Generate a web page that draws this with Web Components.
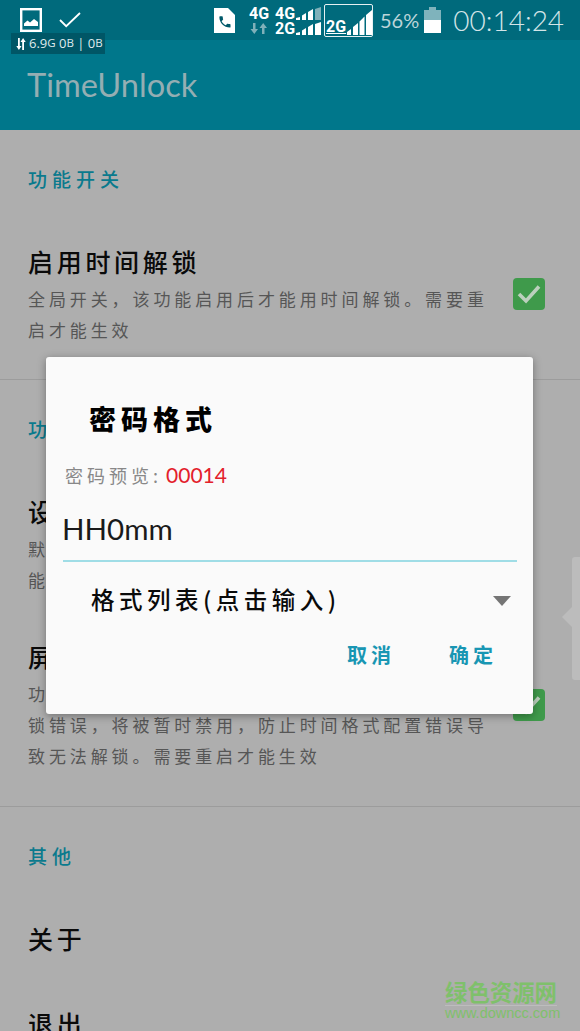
<!DOCTYPE html>
<html lang="zh">
<head>
<meta charset="utf-8">
<title>TimeUnlock</title>
<style>
    html, body{ margin:0; padding:0; }
    body{
        width:580px;
        height:1031px;
        overflow:hidden;
        position:relative;
        background:#aeaeae;
        font-family:"Lato","Noto Sans CJK SC",sans-serif;
    }
</style>
</head>
<body>
<status-bar></status-bar>
<app-bar>TimeUnlock</app-bar>

<pref-section title="功能开关" last-pad="34">
    <pref-item head="启用时间解锁" checked>全局开关，该功能启用后才能用时间解锁。需要重启才能生效</pref-item>
</pref-section>

<pref-section title="功能设置" last-pad="35">
    <pref-item head="设置密码格式">默认使用当前的时分作为密码，修改后需要重启才能生效</pref-item>
    <pref-item head="屏蔽时间解锁错误" checked gap="43">功能启用后，如果在屏幕解锁连续多次出现时间解锁错误，将被暂时禁用，防止时间格式配置错误导致无法解锁。需要重启才能生效</pref-item>
</pref-section>

<pref-section title="其他" plain>
    <pref-item head="关于"></pref-item>
    <pref-item head="退出" gap="49"></pref-item>
</pref-section>

<side-handle></side-handle>
<water-mark></water-mark>

<format-dialog>
    <span slot="title">密码格式</span>
    <span slot="label">密码预览:</span>
    <span slot="preview">00014</span>
    <span slot="input">HH0mm</span>
    <span slot="spinner">格式列表(点击输入)</span>
    <span slot="cancel">取消</span>
    <span slot="ok">确定</span>
</format-dialog>

<script>
//STATUS BAR
var template_statusbar = document.createElement("template");
template_statusbar.innerHTML = `
<style>
    :host{
        display:flex;
        align-items:center;
        height:40px;
        background:#006a7c;
        color:#fff;
        position:relative;
        font-family:"Roboto",sans-serif;
    }
    svg{ display:block; flex:none; }
    .pic{ margin-left:20px; }
    .tick{ margin-left:17px; }
    .sim{ margin-left:133px; }
    .net{
        margin-left:14px;
        margin-top:2px;
        width:75px;
        display:grid;
        grid-template-columns:26px 21px 28px;
        grid-template-rows:15px 15px;
        align-items:center;
        font:700 16px/15px "Roboto",sans-serif;
    }
    .box{
        box-sizing:border-box;
        width:49px;
        height:33px;
        border:1.5px solid #e6f0f2;
        border-radius:2px;
        display:flex;
        align-items:flex-end;
        padding:0 1px 1px 1px;
        font:700 16px/17px "Roboto",sans-serif;
    }
    .box u{ text-underline-offset:1px; }
    .pct{
        margin-left:7px;
        font:400 20px/1 "Lato",sans-serif;
        color:#bcd5d9;
    }
    .bat{ margin-left:5px; }
    .clock{
        margin-left:12px;
        font:300 28px/1 "Lato",sans-serif;
        color:#d4e5e8;
    }
    .chip{
        position:absolute;
        left:11px;
        top:33px;
        width:94px;
        height:21px;
        box-sizing:border-box;
        padding-left:5px;
        background:#005666;
        display:flex;
        align-items:center;
        gap:3px;
        font:400 13px/1 "Open Sans",sans-serif;
        color:#dfeaec;
        white-space:nowrap;
    }
    .chip sup{ font-size:11.5px; vertical-align:1px; line-height:0; }
</style>
<svg class="pic" width="22" height="24" viewBox="0 0 22 24">
    <rect x="1.2" y="1.2" width="19.6" height="21.6" fill="none" stroke="#fff" stroke-width="2.4"/>
    <path d="M4 18v-2.5l3.5-3 2.5 2 4-3.500 4 3V18z" fill="#fff"/>
</svg>
<svg class="tick" width="22" height="16" viewBox="0 0 22 16">
    <path d="M1 8l6.200 6.200L21 1" fill="none" stroke="#fff" stroke-width="1.800"/>
</svg>
<svg class="sim" width="21" height="25" viewBox="0 0 21 25">
    <path d="M0 0h14l7 7v18H0z" fill="#fff"/>
    <g transform="translate(3.500 6.500) scale(.62)">
        <path fill="#00596a" d="M6.62 10.79c1.44 2.83 3.76 5.14 6.59 6.59l2.2-2.2c.27-.27.67-.36 1.02-.24 1.12.37 2.33.57 3.57.57.55 0 1 .45 1 1V20c0 .55-.45 1-1 1-9.39 0-17-7.61-17-17 0-.55.45-1 1-1h3.5c.55 0 1 .45 1 1 0 1.25.2 2.45.57 3.57.11.35.03.74-.25 1.02l-2.2 2.2z"/>
    </g>
</svg>
<div class="net">
    <span>4G</span><span>4G</span>
    <svg width="25" height="13" viewBox="0 0 25 13">
        <path fill="#fff" d="M0 11l4-1v3H0zM6 8.500l4-2.500v7H6zM12 5l5-3v11h-5z"/><path fill="#7fb0b9" d="M19 2l6-2v13h-6z"/>
    </svg>
    <svg width="20" height="11" viewBox="0 0 20 11">
        <path fill="#7fb0b9" d="M4 0h2.500v6H9l-3.700 5L1.500 6H4zM13 11V5h-2.500l3.700-5L18 5h-2.500v6z"/>
    </svg>
    <span>2G</span>
    <svg width="25" height="13" viewBox="0 0 25 13">
        <path fill="#fff" d="M0 11l4-1v3H0zM6 8.500l4-2.500v7H6zM12 5l5-3v11h-5zM19 2l6-2v13h-6z"/>
    </svg>
</div>
<div class="box">
    <u>2G</u>
    <svg style="margin-left:1px" width="25" height="25" viewBox="0 0 25 25">
        <path fill="#fff" d="M0 22l4-3v6H0zM6 17l5-4v12H6zM12.500 11.500l5-5V25h-5zM19 5l6-5v25h-6z"/>
    </svg>
</div>
<span class="pct">56%</span>
<svg class="bat" width="17" height="26" viewBox="0 0 17 26">
    <path fill="#7fb3bc" d="M5 0h7v3h5v10H0V3h5z"/>
    <rect y="13" width="17" height="13" fill="#fff"/>
</svg>
<span class="clock">00:14:24</span>
<div class="chip">
    <svg width="10" height="12" viewBox="0 0 10 12">
        <path fill="#fff" d="M2 0h1.800v8H5.500L2.900 12 .3 8H2zM6.200 12V4H4.500L7.100 0l2.600 4H8v8z"/>
    </svg>
    <span>6.9<sup>G</sup> 0<sup>B</sup> | 0<sup>B</sup></span>
</div>
`;
class StatusBar extends HTMLElement {
    constructor(){
        super();
        this.attachShadow({mode:"open"});
    }
    connectedCallback(){
        this.shadowRoot.appendChild(template_statusbar.content.cloneNode(true));
    }
}
customElements.define("status-bar", StatusBar);

//APP BAR
var template_appbar = document.createElement("template");
template_appbar.innerHTML = `
<style>
    :host{
        display:flex;
        align-items:center;
        height:90px;
        padding-left:27px;
        box-sizing:border-box;
        background:#00778b;
        color:#94aeb3;
        font:400 32.6px/1 "Lato",sans-serif;
    }
</style>
<slot></slot>
`;
class AppBar extends HTMLElement {
    constructor(){
        super();
        this.attachShadow({mode:"open"});
    }
    connectedCallback(){
        this.shadowRoot.appendChild(template_appbar.content.cloneNode(true));
    }
}
customElements.define("app-bar", AppBar);

//SECTION WITH HEADER AND DIVIDER
var template_section = document.createElement("template");
template_section.innerHTML = `
<style>
    :host{
        display:block;
        padding:35px 0 var(--bottom, 32px) 28px;
        border-bottom:1px solid #9c9c9c;
    }
    :host([plain]){ border-bottom:0; padding-bottom:0; }
    .head{
        font:500 19px/28px "Noto Sans CJK SC",sans-serif;
        letter-spacing:5px;
        color:#0a7a8d;
        margin-bottom:50px;
    }
</style>
<div class="head"></div>
<slot></slot>
`;
class PrefSection extends HTMLElement {
    constructor(){
        super();
        this.attachShadow({mode:"open"});
    }
    connectedCallback(){
        this.shadowRoot.appendChild(template_section.content.cloneNode(true));
        this.shadowRoot.querySelector(".head").innerText = this.getAttribute("title");
        this.removeAttribute("title");
        if(this.hasAttribute("last-pad")){
            this.style.setProperty("--bottom", this.getAttribute("last-pad") + "px");
        }
    }
}
customElements.define("pref-section", PrefSection);

//PREFERENCE ROW
var template_item = document.createElement("template");
template_item.innerHTML = `
<style>
    :host{
        display:flex;
        align-items:center;
        width:517px;
        justify-content:space-between;
    }
    .text{ width:470px; }
    .title{
        font:500 25px/36px "Noto Sans CJK SC",sans-serif;
        letter-spacing:3.7px;
        color:#0a0a0a;
    }
    .sum{
        margin-top:4px;
        font:400 17px/31px "Noto Sans CJK SC",sans-serif;
        letter-spacing:3.9px;
        color:#565656;
    }
    .box{
        flex:none;
        width:32px;
        height:32px;
        border-radius:4px;
        background:#3f9a4b;
        display:none;
        align-items:center;
        justify-content:center;
    }
    :host([checked]) .box{ display:flex; }
</style>
<div class="text">
    <div class="title"></div>
    <div class="sum"><slot></slot></div>
</div>
<div class="box">
    <svg width="24" height="20" viewBox="0 0 24 20">
        <path d="M2 10l7 7L22 2.500" fill="none" stroke="#bcd0bd" stroke-width="3.600"/>
    </svg>
</div>
`;
class PrefItem extends HTMLElement {
    constructor(){
        super();
        this.attachShadow({mode:"open"});
    }
    connectedCallback(){
        this.shadowRoot.appendChild(template_item.content.cloneNode(true));
        this.shadowRoot.querySelector(".title").innerText = this.getAttribute("head");
        if(this.hasAttribute("gap")){
            this.style.marginTop = this.getAttribute("gap") + "px";
        }
        if(this.textContent.trim() == ""){
            this.shadowRoot.querySelector(".sum").style.display = "none";
        }
    }
}
customElements.define("pref-item", PrefItem);

//HANDLE ON THE RIGHT EDGE
var template_handle = document.createElement("template");
template_handle.innerHTML = `
<style>
    :host{
        position:absolute;
        left:572px;
        top:557px;
        width:8px;
        height:123px;
        background:#bcbcbc;
        border-radius:3px 0 0 3px;
    }
    .tip{
        position:absolute;
        left:-10px;
        top:50px;
        width:0;
        height:0;
        border-style:solid;
        border-width:10px 10px 10px 0;
        border-color:transparent #bcbcbc transparent transparent;
    }
</style>
<div class="tip"></div>
`;
class SideHandle extends HTMLElement {
    constructor(){
        super();
        this.attachShadow({mode:"open"});
    }
    connectedCallback(){
        this.shadowRoot.appendChild(template_handle.content.cloneNode(true));
    }
}
customElements.define("side-handle", SideHandle);

//SITE WATERMARK
var template_mark = document.createElement("template");
template_mark.innerHTML = `
<style>
    :host{
        position:absolute;
        left:445px;
        top:978px;
        width:112px;
        color:#7fc06b;
        text-align:center;
    }
    .cn{
        font:700 22.400px/27px "Noto Sans CJK SC",sans-serif;
        white-space:nowrap;
        border-bottom:1px solid #bdbdbd;
    }
    .en{
        font:400 14.500px/15px "Liberation Sans",sans-serif;
        white-space:nowrap;
    }
</style>
<div class="cn">绿色资源网</div>
<div class="en">www.downcc.com</div>
`;
class WaterMark extends HTMLElement {
    constructor(){
        super();
        this.attachShadow({mode:"open"});
    }
    connectedCallback(){
        this.shadowRoot.appendChild(template_mark.content.cloneNode(true));
    }
}
customElements.define("water-mark", WaterMark);

//DIALOG
var template_dialog = document.createElement("template");
template_dialog.innerHTML = `
<style>
    :host{
        position:absolute;
        left:46px;
        top:357px;
        width:487px;
        height:357px;
        box-sizing:border-box;
        padding:43px 16px 0 17px;
        background:#fafafa;
        border-radius:3px;
        box-shadow:0 2px 8px rgba(0,0,0,.35);
        display:flex;
        flex-direction:column;
        font-family:"Noto Sans CJK SC",sans-serif;
    }
    .title{
        margin-left:26px;
        font:900 27px/38px "Noto Sans CJK SC",sans-serif;
        letter-spacing:5px;
        color:#000;
    }
    .preview{
        margin-top:19px;
        margin-left:2px;
        display:flex;
        align-items:center;
        height:36px;
        font:400 18px/36px "Noto Sans CJK SC",sans-serif;
        letter-spacing:4px;
        color:#888;
    }
    .red{
        margin-left:4px;
        font:400 21px/36px "Lato",sans-serif;
        letter-spacing:0;
        color:#e3202b;
    }
    .input{
        margin-top:12px;
        height:55px;
        box-sizing:content-box;
        border-bottom:2px solid #a0dde6;
        font:400 29.5px/48px "Lato",sans-serif;
        text-indent:-1px;
        color:#1a1a1a;
    }
    .spinner{
        margin-top:17px;
        height:40px;
        padding-left:28px;
        display:flex;
        align-items:center;
        justify-content:space-between;
        font:500 23.500px/40px "Noto Sans CJK SC",sans-serif;
        letter-spacing:4.500px;
        color:#0a0a0a;
    }
    .arrow{
        margin-right:6px;
        margin-top:3px;
        width:0;
        height:0;
        border-style:solid;
        border-width:10px 9.500px 0 9.500px;
        border-color:#757575 transparent transparent transparent;
    }
    .actions{
        margin-top:21px;
        display:flex;
        justify-content:flex-end;
        gap:54px;
        padding-right:20px;
        font:700 20px/30px "Noto Sans CJK SC",sans-serif;
        letter-spacing:4px;
        color:#1896b3;
    }
</style>
<div class="title"><slot name="title"></slot></div>
<div class="preview"><slot name="label"></slot><span class="red"><slot name="preview"></slot></span></div>
<div class="input"><slot name="input"></slot></div>
<div class="spinner"><span><slot name="spinner"></slot></span><span class="arrow"></span></div>
<div class="actions"><slot name="cancel"></slot><slot name="ok"></slot></div>
`;
class FormatDialog extends HTMLElement {
    constructor(){
        super();
        this.attachShadow({mode:"open"});
    }
    connectedCallback(){
        this.shadowRoot.appendChild(template_dialog.content.cloneNode(true));
    }
}
customElements.define("format-dialog", FormatDialog);
</script>
</body>
</html>
